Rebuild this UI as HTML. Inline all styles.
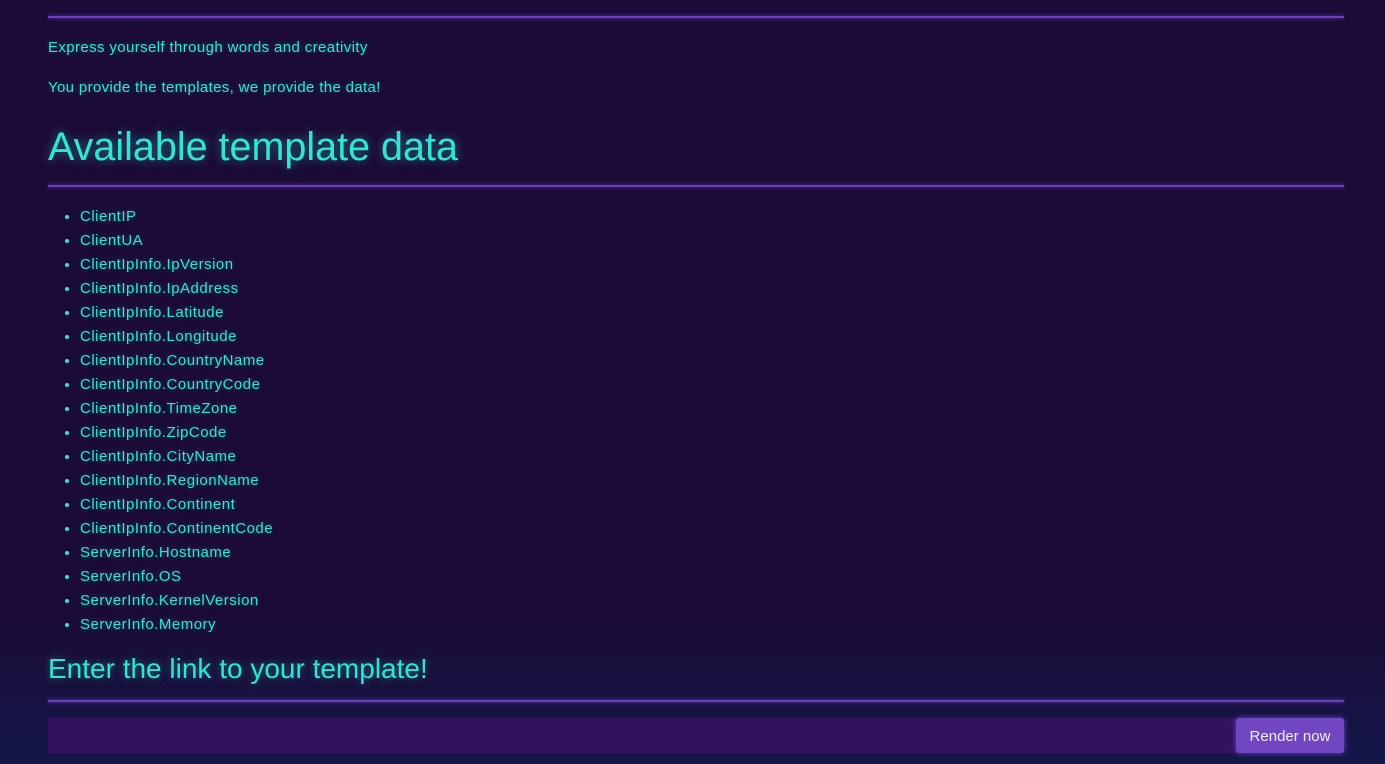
<!DOCTYPE html>
<html><head><style>
html,body{margin:0;height:764px;overflow:hidden}
body{background:linear-gradient(to bottom,#1b0b36 0,#1b0b36 620px,#13174a 764px);font-family:"Liberation Sans",sans-serif;color:#2fe6d5;position:relative;width:1385px}
.hr{position:absolute;left:48px;width:1296px;height:2px;background:#6b3fc4;box-shadow:0 0 4px #6b3fc4}
.t{position:absolute;left:48px;white-space:nowrap;text-shadow:0 0 6px rgba(47,230,213,.35)}
ul{position:absolute;left:48px;top:205px;margin:0;padding:0 0 0 32px;font-size:15px;line-height:24px;letter-spacing:0.5px}
li{text-shadow:0 0 6px rgba(47,230,213,.35)}
</style></head><body>
<div class="hr" style="top:16px"></div>
<div class="t" style="top:39px;font-size:15px;letter-spacing:0.38px">Express yourself through words and creativity</div>
<div class="t" style="top:79px;font-size:15px;letter-spacing:0.35px">You provide the templates, we provide the data!</div>
<div class="t" style="top:125px;font-size:39.5px;text-shadow:0 0 10px rgba(47,230,213,.5)">Available template data</div>
<div class="hr" style="top:185px"></div>
<ul>
<li>ClientIP</li><li>ClientUA</li><li>ClientIpInfo.IpVersion</li><li>ClientIpInfo.IpAddress</li><li>ClientIpInfo.Latitude</li><li>ClientIpInfo.Longitude</li><li>ClientIpInfo.CountryName</li><li>ClientIpInfo.CountryCode</li><li>ClientIpInfo.TimeZone</li><li>ClientIpInfo.ZipCode</li><li>ClientIpInfo.CityName</li><li>ClientIpInfo.RegionName</li><li>ClientIpInfo.Continent</li><li>ClientIpInfo.ContinentCode</li><li>ServerInfo.Hostname</li><li>ServerInfo.OS</li><li>ServerInfo.KernelVersion</li><li>ServerInfo.Memory</li>
</ul>
<div class="t" style="top:653px;font-size:28px;text-shadow:0 0 8px rgba(47,230,213,.45)">Enter the link to your template!</div>
<div class="hr" style="top:700px"></div>
<div style="position:absolute;left:48px;top:718px;width:1188px;height:35px;background:#32125e"></div>
<div style="position:absolute;left:1236px;top:718px;width:108px;height:35px;background:#7245c3;border-radius:3px;color:#eee;font-size:15px;line-height:37px;text-align:center;box-shadow:0 0 6px #7245c3">Render now</div>
</body></html>
